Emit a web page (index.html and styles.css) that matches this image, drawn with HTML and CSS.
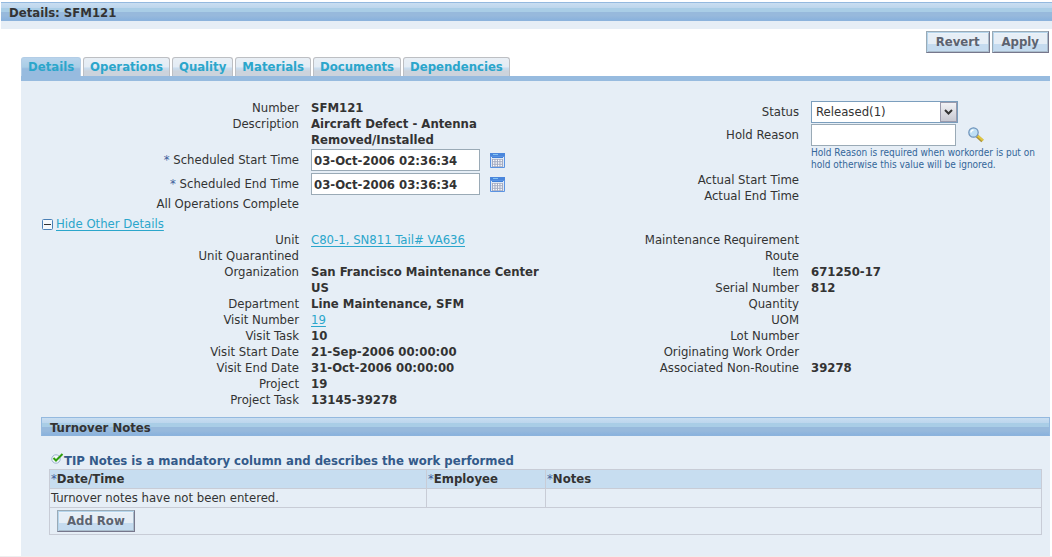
FILE: index.html
```
<!DOCTYPE html>
<html lang="en">
<head>
    <meta charset="UTF-8">
    <title>Details: SFM121</title>
    <link rel="stylesheet" href="styles.css">
</head>
<body>
<!-- shared icon for the two date pickers -->
<svg class="defs" width="0" height="0" aria-hidden="true">
    <symbol id="calendar" viewBox="0 0 15 15">
        <rect width="15" height="15" rx="1" fill="#5b93e2"/>
        <path d="M0 1.500h15" stroke="#4a86dc" stroke-width="3"/>
        <path d="M3 1.500h5" stroke="#83c4f2"/>
        <rect x="1" y="4" width="13" height="10" fill="#dfe8f4"/>
        <path d="M2 4.500h11" stroke="#3f7fd8"/>
        <rect x="2" y="6" width="11" height="8" fill="#a3abc2"/>
        <path d="M3 7.500h9M3 10h9M3 12.500h9" stroke="#fff" stroke-width="1.400" stroke-dasharray="1.400 1.100"/>
    </symbol>
</svg>

<header>
    <h1 class="bar">Details: SFM121</h1>
</header>
<div class="actions">
    <button class="btn" type="button">Revert</button>
    <button class="btn" type="button">Apply</button>
</div>

<nav class="tabs">
    <a class="tab active" href="#details">Details</a>
    <a class="tab" href="#operations">Operations</a>
    <a class="tab" href="#quality">Quality</a>
    <a class="tab" href="#materials">Materials</a>
    <a class="tab" href="#documents">Documents</a>
    <a class="tab" href="#dependencies">Dependencies</a>
</nav>

<main class="panel" id="details">
    <div class="columns">
        <div class="left">
            <div class="row"><span class="label">Number</span><b>SFM121</b></div>
            <div class="row"><span class="label">Description</span><b>Aircraft Defect - Antenna Removed/Installed</b></div>
            <div class="row control">
                <label class="label" for="start"><span class="req">*</span> Scheduled Start Time</label>
                <div class="field">
                    <input class="date" id="start" type="text" value="03-Oct-2006 02:36:34">
                    <button class="icon" type="button" aria-label="Pick start time"><svg width="15" height="15"><use href="#calendar"/></svg></button>
                </div>
            </div>
            <div class="row control">
                <label class="label" for="end"><span class="req">*</span> Scheduled End Time</label>
                <div class="field">
                    <input class="date" id="end" type="text" value="03-Oct-2006 03:36:34">
                    <button class="icon" type="button" aria-label="Pick end time"><svg width="15" height="15"><use href="#calendar"/></svg></button>
                </div>
            </div>
            <div class="row"><span class="label">All Operations Complete</span></div>
        </div>
        <div class="right">
            <div class="row control">
                <label class="label" for="status">Status</label>
                <div class="field">
                    <div class="select">
                        <select id="status"><option>Released(1)</option></select>
                        <span class="arrow">
                            <svg width="9" height="6" viewBox="0 0 9 6"><path d="M1 1l3.500 3.500L8 1" fill="none" stroke="#333" stroke-width="2"/></svg>
                        </span>
                    </div>
                </div>
            </div>
            <div class="row control">
                <label class="label" for="hold">Hold Reason</label>
                <div class="field">
                    <input class="hold" id="hold" type="text">
                    <button class="icon search" type="button" aria-label="Search hold reason">
                        <svg width="16" height="16" viewBox="0 0 16 16">
                            <path d="M9 9l5.500 5" stroke="#a8923c" stroke-width="3.500"/>
                            <path d="M9.500 8.500l5.500 5" stroke="#e3c83f" stroke-width="2"/>
                            <circle cx="5.500" cy="5.500" r="4.700" fill="#bfe0f5" stroke="#6f93ba" stroke-width="1.200"/>
                            <path d="M3 5.500a2.500 2.500 0 0 1 2.500-2.500" fill="none" stroke="#fff" stroke-width="1.500"/>
                        </svg>
                    </button>
                </div>
            </div>
            <div class="row"><span></span><p class="hint">Hold Reason is required when workorder is put on hold otherwise this value will be ignored.</p></div>
            <div class="row"><span class="label">Actual Start Time</span></div>
            <div class="row"><span class="label">Actual End Time</span></div>
        </div>
    </div>

    <div class="toggle">
        <svg width="11" height="11" viewBox="0 0 11 11">
            <rect x="0.500" y="0.500" width="10" height="10" rx="1" fill="#f4f8fc" stroke="#4a7fb5"/>
            <path d="M2 5.500h7" stroke="#333"/>
        </svg>
        <a href="#other">Hide Other Details</a>
    </div>

    <div class="columns" id="other">
        <div class="left">
            <div class="row"><span class="label">Unit</span><a href="#unit">C80-1, SN811 Tail# VA636</a></div>
            <div class="row"><span class="label">Unit Quarantined</span></div>
            <div class="row"><span class="label">Organization</span><b>San Francisco Maintenance Center US</b></div>
            <div class="row"><span class="label">Department</span><b>Line Maintenance, SFM</b></div>
            <div class="row"><span class="label">Visit Number</span><a href="#visit">19</a></div>
            <div class="row"><span class="label">Visit Task</span><b>10</b></div>
            <div class="row"><span class="label">Visit Start Date</span><b>21-Sep-2006 00:00:00</b></div>
            <div class="row"><span class="label">Visit End Date</span><b>31-Oct-2006 00:00:00</b></div>
            <div class="row"><span class="label">Project</span><b>19</b></div>
            <div class="row"><span class="label">Project Task</span><b>13145-39278</b></div>
        </div>
        <div class="right">
            <div class="row"><span class="label">Maintenance Requirement</span></div>
            <div class="row"><span class="label">Route</span></div>
            <div class="row"><span class="label">Item</span><b>671250-17</b></div>
            <div class="row"><span class="label">Serial Number</span><b>812</b></div>
            <div class="row"><span class="label">Quantity</span></div>
            <div class="row"><span class="label">UOM</span></div>
            <div class="row"><span class="label">Lot Number</span></div>
            <div class="row"><span class="label">Originating Work Order</span></div>
            <div class="row"><span class="label">Associated Non-Routine</span><b>39278</b></div>
        </div>
    </div>

    <section class="notes">
        <h2 class="bar">Turnover Notes</h2>
        <p class="tip">
            <svg width="13" height="11" viewBox="0 0 13 11">
                <circle cx="5" cy="6" r="4.200" fill="#f4f8fc" stroke="#9ab3cc"/>
                <path d="M2.500 5l2.500 2.500L11.500 1" fill="none" stroke="#2f9e0c" stroke-width="2"/>
            </svg>TIP Notes is a mandatory column and describes the work performed
        </p>
        <table>
            <thead>
                <tr>
                    <th class="date-col"><span class="req">*</span>Date/Time</th>
                    <th class="emp-col"><span class="req">*</span>Employee</th>
                    <th><span class="req">*</span>Notes</th>
                </tr>
            </thead>
            <tbody>
                <tr>
                    <td>Turnover notes have not been entered.</td>
                    <td></td>
                    <td></td>
                </tr>
                <tr>
                    <td class="add" colspan="3"><button class="btn" type="button">Add Row</button></td>
                </tr>
            </tbody>
        </table>
    </section>
</main>
</body>
</html>
```
FILE: styles.css
```
* {
    box-sizing: border-box;
}

body {
    margin: 0;
    padding-top: 2px;
    min-height: 100vh;
    display: flex;
    flex-direction: column;
    background: white;
    border-bottom: 1px solid #eeeeee;
    color: #333333;
    font: 13px/16px "DejaVu Sans Condensed", Tahoma, "DejaVu Sans", sans-serif;
}

.defs {
    position: absolute;
}

p {
    margin: 0;
}

svg {
    display: block;
}

a {
    color: #2ba6cb;
    text-underline-offset: 2px;
}

header {
    margin-left: 1px;
    padding-bottom: 8px;
    background: #e6eef6;
}

.bar {
    margin: 0;
    padding: 0 8px;
    height: 19px;
    border: 1px solid #94b9df;
    border-bottom-color: #8cb3dc;
    background: linear-gradient(#c9def1 0, #bdd6ed 28%, #a9cde6 30%, #a9cde6 50%, #97b9dc 52%, #97b9dc 75%, #8ab2dd 100%);
    font-size: 13px;
    line-height: 19px;
}

header .bar {
    border-right: 0;
    border-left: 0;
}

.actions {
    display: flex;
    justify-content: flex-end;
    gap: 2px;
    padding: 2px 3px 4px 0;
}

.btn {
    height: 22px;
    padding: 0 9px;
    border: 1px solid;
    border-color: #9aaab6 #77778c #77778c #9aaab6;
    background: linear-gradient(#ffffff 0, #e6eef6 10%, #e6eef6 60%, #c5dbef 62%, #c5dbef 100%);
    box-shadow: inset 1px 1px #b5d5ec, inset -1px -1px #a9bccb;
    color: #5c6370;
    font: bold 13px/18px "DejaVu Sans Condensed", Tahoma, "DejaVu Sans", sans-serif;
}

.tabs {
    display: flex;
    gap: 2px;
    margin: 0 2px 0 21px;
    border-bottom: 5px solid #97bbdf;
}

.tab {
    height: 19px;
    padding: 0 6px;
    border: 1px solid #bdbfc3;
    border-bottom: 0;
    border-radius: 3px 3px 0 0;
    background: linear-gradient(#e9eff5 0, #e3ecf5 50%, #c9def1 55%, #ccd3dc 75%, #ccd3dc 100%);
    font-weight: bold;
    line-height: 18px;
    text-decoration: none;
}

.tab.active {
    border-color: #b3cde6;
    background: linear-gradient(#b9d4ec 0, #a9cde6 50%, #97bbdf 60%);
}

.panel {
    flex: 1;
    margin: 0 2px 0 21px;
    padding: 19px 0 20px;
    background: #e6eef6;
}

.columns {
    display: grid;
    grid-template-columns: 529fr 500fr;
}

.row {
    display: grid;
    column-gap: 12px;
    min-height: 16px;
}

.left .row {
    grid-template-columns: 278fr 239fr;
}

.right .row {
    grid-template-columns: 249fr 239fr;
}

.row.control {
    align-items: center;
    min-height: 24px;
}

.right .row.control {
    min-height: 23px;
}

.label {
    text-align: right;
}

.req {
    color: #3f5f9b;
    font-weight: normal;
}

.field {
    display: flex;
    align-items: center;
    gap: 10px;
}

input,
select {
    height: 22px;
    margin: 0;
    border: 1px solid #9aaab6;
    border-radius: 0;
    background: white;
    color: #333333;
    font: 13px/16px "DejaVu Sans Condensed", Tahoma, "DejaVu Sans", sans-serif;
}

.date {
    width: 169px;
    padding: 0 2px;
    font-weight: bold;
}

.hold {
    width: 145px;
}

.icon {
    padding: 0;
    border: 0;
    background: none;
}

.search {
    margin-left: 2px;
}

.select {
    position: relative;
}

select {
    width: 147px;
    padding: 0 4px;
    border-color: #7b9ebd;
    appearance: none;
}

.arrow {
    position: absolute;
    top: 1px;
    right: 1px;
    bottom: 1px;
    width: 17px;
    display: grid;
    place-items: center;
    border: 1px solid #9a9aac;
    background: linear-gradient(#f2f2f5, #c8c9d2);
    pointer-events: none;
}

.hint {
    padding: 1px 0;
    color: #336699;
    font-size: 10px;
    line-height: 12px;
}

.toggle {
    display: flex;
    align-items: center;
    gap: 3px;
    padding: 4px 0 0 21px;
}

.notes {
    margin: 9px 0 0 20px;
}

.tip {
    display: flex;
    padding: 17px 0 0 10px;
    color: #335a8a;
    font-weight: bold;
}

table {
    width: calc(100% - 16px);
    margin-left: 8px;
    border-collapse: collapse;
    table-layout: fixed;
}

th,
td {
    height: 19px;
    padding: 1px;
    border: 1px solid #c8ccd6;
    text-align: left;
}

th {
    background: #c7ddf0;
}

.date-col {
    width: 38%;
}

.emp-col {
    width: 12%;
}

.add {
    padding: 2px 7px;
}

.add .btn {
    display: block;
}
```
